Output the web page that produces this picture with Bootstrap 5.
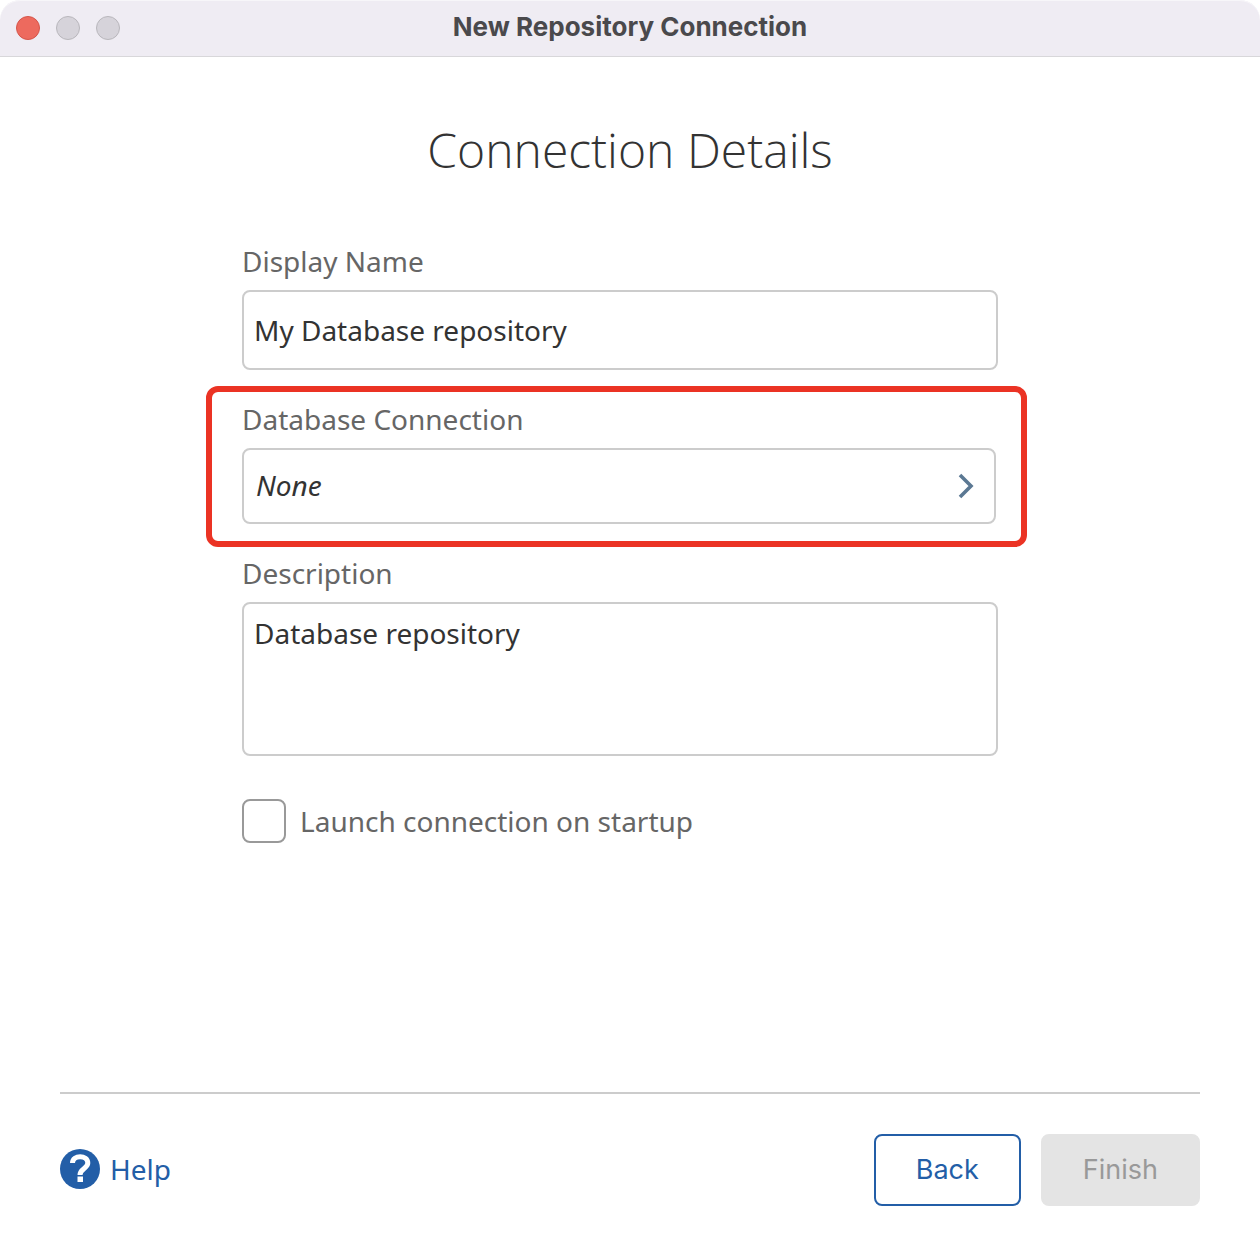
<!DOCTYPE html>
<html lang="en">
<head>
<meta charset="utf-8">
<meta name="viewport" content="width=device-width, initial-scale=1">
<title>New Repository Connection</title>
<link href="https://cdn.jsdelivr.net/npm/bootstrap@5.3.0/dist/css/bootstrap.min.css" rel="stylesheet">
<style>
  :root { --ink: #333; --muted: #666; --line: #ccc; --brand: #235ea7; }
  body { font-family: "Noto Sans", "Open Sans", sans-serif; font-size: 28px; line-height: 40px; color: var(--ink); }
  .titlebar { min-height: 57px; padding: 0 16px; background: #efecf3; box-shadow: inset 0 1px #f7f6f9; border-bottom: 1px solid #d8d7da; border-radius: 20px 20px 0 0; }
  .titlebar-side { flex: 1 1 0; }
  .titlebar-text { font: 700 26px/54px Inter, sans-serif; color: #4a494c; padding-bottom: 2px; }
  .dot { width: 24px; height: 24px; padding: 0; border: 1px solid #b9b7bc; border-radius: 50%; background: #d6d3da; }
  .dot-close { background: #ed6a5e; border-color: #d5554a; }
  .page-title { font-family: "Open Sans", sans-serif; font-weight: 300; font-size: 48px; line-height: 64px; color: var(--ink); margin: 61px 0 60px; }
  .details { padding: 0 262px 0 242px; }
  .field-label { color: var(--muted); margin-bottom: 10px; line-height: 38px; }
  .field-box { border: 2px solid var(--line); border-radius: 8px; padding: 0 10px; font-size: 28px; line-height: 38px; color: var(--ink); background: #fff; }
  .name-box { height: 80px; }
  .picker { height: 76px; padding: 0 20px 0 12px; }
  .picker em { padding-bottom: 2px; }
  .note-box { height: 154px; padding-top: 10px; resize: none; }
  .callout { border: 6px solid #eb3324; border-radius: 12px; margin: 16px -29px 7px -36px; padding: 8px 25px 17px 30px; }
  .launch { margin-top: 43px; gap: 14px; color: var(--muted); }
  .launch .form-check-input { width: 44px; height: 44px; border: 2px solid #999; border-radius: 8px; }
  .page-foot { margin: 0 60px; padding: 40px 0 54px; border-top: 2px solid var(--line); }
  .help { color: var(--brand); gap: 10px; padding-bottom: 2px; }
  .foot-actions { gap: 20px; }
  .foot-actions .btn { font: 400 27px/40px Inter, sans-serif; padding: 14px 40px; border: 2px solid var(--brand); border-radius: 8px; color: var(--brand); }
  .foot-actions .btn:disabled { background: #e4e4e4; border-color: #e4e4e4; color: #999; opacity: 1; }
  @media (max-width: 900px) {
    .details { padding: 0 48px; }
    .page-foot { margin: 0 24px; }
  }
</style>
</head>
<body class="min-vh-100 d-flex flex-column bg-white">
<header class="titlebar d-flex align-items-center">
  <div class="titlebar-side d-flex gap-3">
    <button type="button" class="dot dot-close" aria-label="Close"></button>
    <button type="button" class="dot" aria-label="Minimize" disabled></button>
    <button type="button" class="dot" aria-label="Zoom" disabled></button>
  </div>
  <div class="titlebar-text">New Repository Connection</div>
  <div class="titlebar-side"></div>
</header>

<main class="flex-grow-1">
  <h1 class="page-title text-center">Connection Details</h1>
  <form class="details" id="details">
    <label class="field-label d-block" for="displayName">Display Name</label>
    <input class="form-control field-box name-box" id="displayName" type="text" value="My Database repository">

    <div class="callout">
      <label class="field-label d-block" for="dbConnection">Database Connection</label>
      <button type="button" id="dbConnection" class="field-box picker w-100 d-flex align-items-center justify-content-between">
        <em>None</em>
        <svg width="16" height="26" viewBox="0 0 16 26" fill="none" stroke="#5b7893" stroke-width="3.600" aria-hidden="true"><path d="M2 2 L13 13 L2 24"/></svg>
      </button>
    </div>

    <label class="field-label d-block" for="description">Description</label>
    <textarea class="form-control field-box note-box" id="description">Database repository</textarea>

    <div class="launch d-flex align-items-center">
      <input class="form-check-input m-0 flex-shrink-0" type="checkbox" id="launch">
      <label for="launch">Launch connection on startup</label>
    </div>
  </form>
</main>

<footer class="page-foot d-flex align-items-center justify-content-between">
  <a href="#help" class="help d-flex align-items-center text-decoration-none">
    <svg width="40" height="40" viewBox="0 0 40 40" aria-hidden="true">
      <circle cx="20" cy="20" r="20" fill="#235ea7"/>
      <path d="M12.500 14 C12.500 5.500 27.800 5.500 27.800 14 C27.800 19.500 20 19.500 20 26" fill="none" stroke="#fff" stroke-width="5"/>
      <rect x="17.500" y="27.500" width="5.500" height="5.500" fill="#fff"/>
    </svg>
    <span>Help</span>
  </a>
  <div class="foot-actions d-flex">
    <button type="button" class="btn">Back</button>
    <button type="submit" form="details" class="btn" disabled>Finish</button>
  </div>
</footer>
<script src="https://cdn.jsdelivr.net/npm/bootstrap@5.3.0/dist/js/bootstrap.bundle.min.js"></script>
</body>
</html>
